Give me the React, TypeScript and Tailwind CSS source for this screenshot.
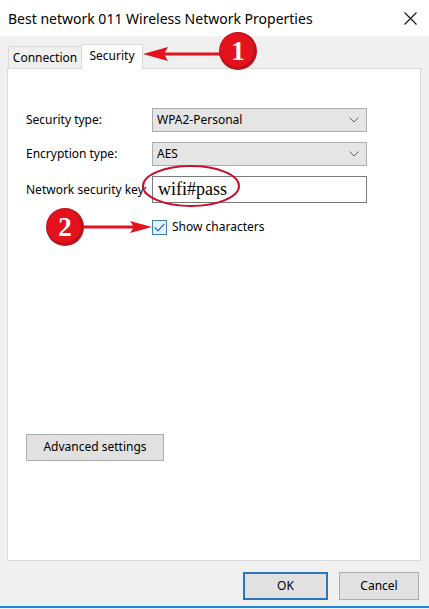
import React from "react";

const font = { fontFamily: '"Segoe UI", "Noto Sans", "Open Sans", sans-serif' };

const Chevron = () => (
  <svg width="10" height="6" viewBox="0 0 10 6" className="text-[#606060]">
    <path d="M0.5 0.5 L5 5 L9.5 0.5" fill="none" stroke="currentColor" strokeWidth="1" />
  </svg>
);

const Select = ({ value }: { value: string }) => (
  <div className="w-[215px] h-[24px] bg-[#e5e5e5] border border-[#adadad] flex items-center justify-between pl-[4px] pr-[7px] text-[12px] text-black">
    <span>{value}</span>
    <Chevron />
  </div>
);

const Badge = ({ cx, cy, n }: { cx: number; cy: number; n: string }) => (
  <g>
    <circle cx={cx} cy={cy} r="19" fill="#b8121b" />
    <circle cx={cx - 1} cy={cy - 1} r="17" fill="#e3121d" />
    <text
      x={cx}
      y={cy + 9}
      textAnchor="middle"
      fill="#ffffff"
      fontSize="27"
      fontWeight="bold"
      fontFamily='"Liberation Serif", serif'
    >
      {n}
    </text>
  </g>
);

const App = () => {
  return (
    <div className="relative w-[429px] h-[609px] bg-[#f0f0f0] flex flex-col overflow-hidden" style={font}>
      {/* Title bar */}
      <div className="h-[36px] bg-white flex items-center justify-between pl-[8px] pr-[12px] shrink-0">
        <span className="text-[14px] text-black">Best network 011 Wireless Network Properties</span>
        <svg width="13" height="13" viewBox="0 0 13 13">
          <path d="M0.5 0.5 L12.5 12.5 M12.5 0.5 L0.5 12.5" stroke="#111" strokeWidth="1.1" />
        </svg>
      </div>

      {/* Tabs */}
      <div className="flex items-end px-[8px] pt-[8px] h-[32px] shrink-0">
        <div className="h-[22px] w-[73px] border border-b-0 border-r-0 border-[#d9d9d9] bg-[#f0f0f0] flex items-center justify-center text-[12px] text-black">
          Connection
        </div>
        <div className="h-[25px] w-[62px] border border-b-0 border-[#d9d9d9] bg-white flex items-center justify-center text-[12px] text-black -mb-px relative z-10 pb-[3px]">
          Security
        </div>
      </div>

      {/* Panel */}
      <div className="mx-[7px] w-[414px] h-[493px] bg-white border border-[#d9d9d9] shrink-0 flex flex-col pl-[18px] pt-[39px]">
        <div className="flex items-center h-[24px] text-[12px] text-black">
          <span className="w-[126px]">Security type:</span>
          <Select value="WPA2-Personal" />
        </div>
        <div className="flex items-center h-[24px] mt-[10px] text-[12px] text-black">
          <span className="w-[126px]">Encryption type:</span>
          <Select value="AES" />
        </div>
        <div className="flex items-center h-[27px] mt-[10px] text-[12px] text-black">
          <span className="w-[126px] overflow-hidden whitespace-nowrap">Network security key:</span>
          <div className="w-[215px] h-[27px] border border-[#7a7a7a] bg-white flex items-center pl-[5px]">
            <span className="text-[18px] text-black" style={{ fontFamily: '"Liberation Serif", serif' }}>
              wifi#pass
            </span>
          </div>
        </div>
        <div className="flex items-center mt-[15px] ml-[126px] text-[12px] text-black">
          <div className="w-[15px] h-[15px] border border-[#3c7fb1] bg-[#e5f1fb] flex items-center justify-center">
            <svg width="11" height="9" viewBox="0 0 11 9">
              <path d="M0.8 4.5 L4 7.8 L10.2 0.8" fill="none" stroke="#2b66a8" strokeWidth="1.2" />
            </svg>
          </div>
          <span className="ml-[5px]">Show characters</span>
        </div>

        <div className="mt-[197px]">
          <button className="w-[138px] h-[27px] bg-[#e1e1e1] border border-[#adadad] text-[12px] text-black">
            Advanced settings
          </button>
        </div>
      </div>

      {/* Footer buttons */}
      <div className="flex justify-end gap-[11px] pr-[10px] mt-[11px]">
        <button className="w-[85px] h-[28px] bg-[#e1e1e1] border-2 border-[#2a77c0] text-[12px] text-black">OK</button>
        <button className="w-[80px] h-[28px] bg-[#e1e1e1] border border-[#adadad] text-[12px] text-black">Cancel</button>
      </div>
      <div className="mt-auto h-[2px] bg-[#1c8ad6] mb-[1px]" />

      {/* Annotations */}
      <svg className="absolute inset-0 pointer-events-none" width="429" height="609" viewBox="0 0 429 609">
        <line x1="220" y1="54" x2="162" y2="54" stroke="#e3121d" strokeWidth="3" />
        <path d="M143 54 L168 47 L164 54 L168 61 Z" fill="#e3121d" />
        <Badge cx={238} cy={51} n="1" />

        <line x1="82" y1="227" x2="136" y2="227" stroke="#e3121d" strokeWidth="3" />
        <path d="M152 227 L130 221 L134 227 L130 233 Z" fill="#e3121d" />
        <Badge cx={65} cy={227} n="2" />

        <ellipse cx="191" cy="186" rx="48" ry="20" fill="none" stroke="#c8102e" strokeWidth="2" />
      </svg>
    </div>
  );
};

export default App;
